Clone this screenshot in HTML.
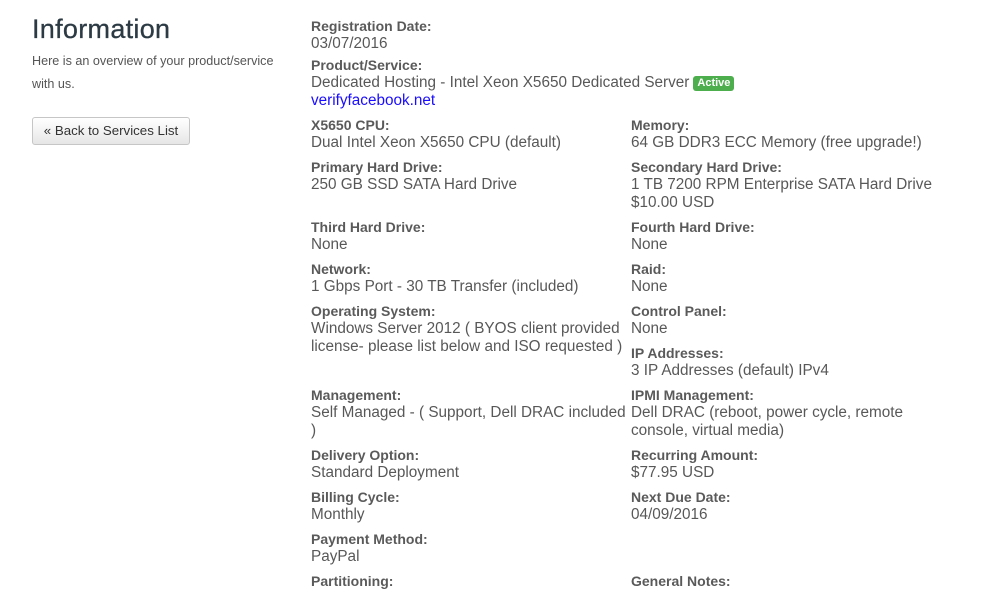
<!DOCTYPE html>
<html><head><meta charset="utf-8"><style>
body{margin:0;width:1004px;height:608px;background:#fff;position:relative;overflow:hidden;font-family:"Liberation Sans",Arial,sans-serif}
.l,.v{position:absolute;white-space:nowrap;line-height:18px;height:18px}
.l{font-weight:bold;font-size:14px;color:#5a5a5a}
.v{font-size:15.3px;color:#585858}
h1{position:absolute;left:32px;top:14px;margin:0;font-size:27px;font-weight:normal;color:#2c3a44;letter-spacing:0.3px;-webkit-text-stroke:0.3px #2c3a44}
.sub{position:absolute;left:32px;top:50px;font-size:12.6px;color:#555;line-height:23px;width:255px}
.btn{position:absolute;left:32px;top:117px;width:158px;height:28px;border:1px solid #c6c6c6;border-radius:3px;background:linear-gradient(#fff,#e6e6e6);font-size:13.3px;color:#333;line-height:26px;text-align:center;box-sizing:border-box}
.badge{display:inline-block;background:#4cae4c;color:#fff;font-weight:bold;font-size:11px;line-height:15px;padding:0 4px;border-radius:3px;vertical-align:1px;margin-left:4px}
a{color:#1a0dff;text-decoration:none}
</style></head><body>
<h1>Information</h1>
<div class="sub">Here is an overview of your product/service with us.</div>
<div class="btn">« Back to Services List</div>

<div class="l" style="left:311px;top:17px">Registration Date:</div>
<div class="v" style="left:311px;top:35px">03/07/2016</div>
<div class="l" style="left:311px;top:56px">Product/Service:</div>
<div class="v" style="left:311px;top:74px">Dedicated Hosting - Intel Xeon X5650 Dedicated Server<span class="badge">Active</span></div>
<div class="v" style="left:311px;top:92px"><a>verifyfacebook.net</a></div>

<div class="l" style="left:311px;top:116px">X5650 CPU:</div>
<div class="v" style="left:311px;top:134px">Dual Intel Xeon X5650 CPU (default)</div>
<div class="l" style="left:311px;top:158px">Primary Hard Drive:</div>
<div class="v" style="left:311px;top:176px">250 GB SSD SATA Hard Drive</div>
<div class="l" style="left:311px;top:218px">Third Hard Drive:</div>
<div class="v" style="left:311px;top:236px">None</div>
<div class="l" style="left:311px;top:260px">Network:</div>
<div class="v" style="left:311px;top:278px">1 Gbps Port - 30 TB Transfer (included)</div>
<div class="l" style="left:311px;top:302px">Operating System:</div>
<div class="v" style="left:311px;top:320px">Windows Server 2012 ( BYOS client provided</div>
<div class="v" style="left:311px;top:338px">license- please list below and ISO requested )</div>
<div class="l" style="left:311px;top:386px">Management:</div>
<div class="v" style="left:311px;top:404px">Self Managed - ( Support, Dell DRAC included</div>
<div class="v" style="left:311px;top:422px">)</div>
<div class="l" style="left:311px;top:446px">Delivery Option:</div>
<div class="v" style="left:311px;top:464px">Standard Deployment</div>
<div class="l" style="left:311px;top:488px">Billing Cycle:</div>
<div class="v" style="left:311px;top:506px">Monthly</div>
<div class="l" style="left:311px;top:530px">Payment Method:</div>
<div class="v" style="left:311px;top:548px">PayPal</div>
<div class="l" style="left:311px;top:572px">Partitioning:</div>

<div class="l" style="left:631px;top:116px">Memory:</div>
<div class="v" style="left:631px;top:134px">64 GB DDR3 ECC Memory (free upgrade!)</div>
<div class="l" style="left:631px;top:158px">Secondary Hard Drive:</div>
<div class="v" style="left:631px;top:176px">1 TB 7200 RPM Enterprise SATA Hard Drive</div>
<div class="v" style="left:631px;top:194px">$10.00 USD</div>
<div class="l" style="left:631px;top:218px">Fourth Hard Drive:</div>
<div class="v" style="left:631px;top:236px">None</div>
<div class="l" style="left:631px;top:260px">Raid:</div>
<div class="v" style="left:631px;top:278px">None</div>
<div class="l" style="left:631px;top:302px">Control Panel:</div>
<div class="v" style="left:631px;top:320px">None</div>
<div class="l" style="left:631px;top:344px">IP Addresses:</div>
<div class="v" style="left:631px;top:362px">3 IP Addresses (default) IPv4</div>
<div class="l" style="left:631px;top:386px">IPMI Management:</div>
<div class="v" style="left:631px;top:404px">Dell DRAC (reboot, power cycle, remote</div>
<div class="v" style="left:631px;top:422px">console, virtual media)</div>
<div class="l" style="left:631px;top:446px">Recurring Amount:</div>
<div class="v" style="left:631px;top:464px">$77.95 USD</div>
<div class="l" style="left:631px;top:488px">Next Due Date:</div>
<div class="v" style="left:631px;top:506px">04/09/2016</div>
<div class="l" style="left:631px;top:572px">General Notes:</div>
</body></html>
